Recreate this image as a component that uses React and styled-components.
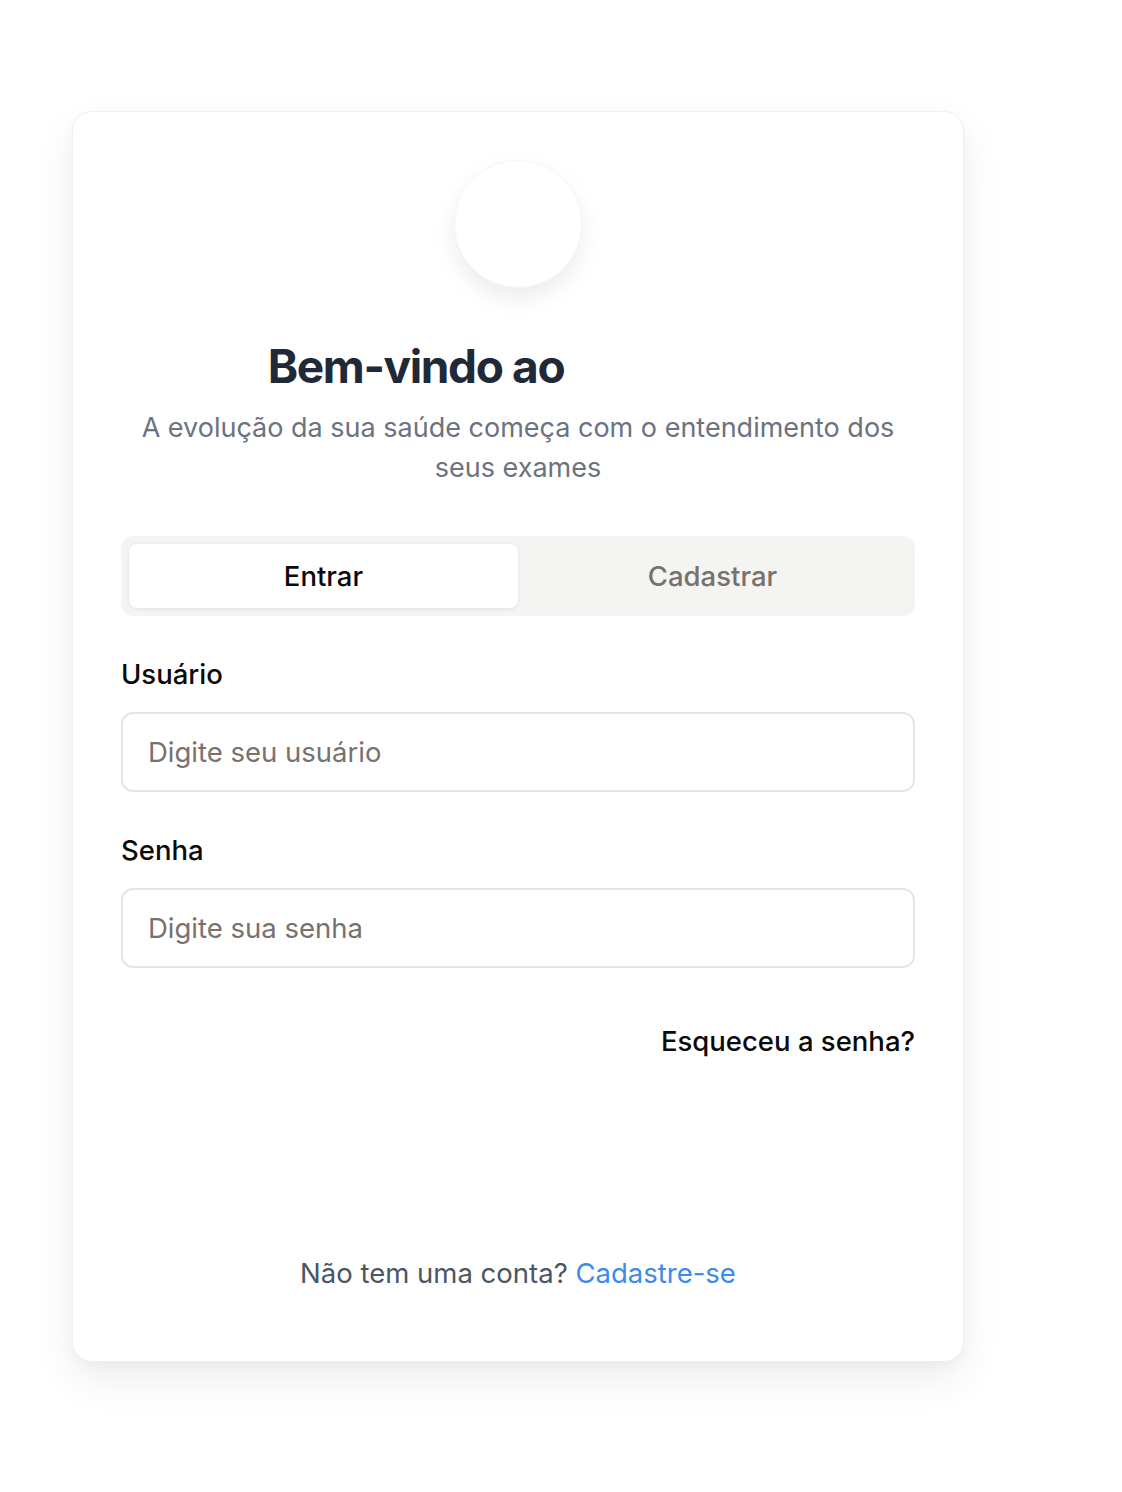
import React from "react";
import styled, { createGlobalStyle } from "styled-components";

const Global = createGlobalStyle`
  html, body { margin: 0; padding: 0; background: #ffffff; }
  body { font-family: Inter, "Noto Sans", "Liberation Sans", sans-serif; -webkit-font-smoothing: antialiased; }
  * { box-sizing: border-box; }
`;

const Page = styled.div`
  padding: 111px 0 120px 72px;
`;

const Card = styled.div`
  width: 892px;
  background: #ffffff;
  border: 1px solid #efefef;
  border-radius: 20px;
  box-shadow: 0 18px 40px rgba(0, 0, 0, 0.07), 0 4px 12px rgba(0, 0, 0, 0.03);
  padding: 48px 48px 68px;
  display: flex;
  flex-direction: column;
`;

const Avatar = styled.div`
  align-self: center;
  width: 128px;
  height: 128px;
  border-radius: 50%;
  background: #ffffff;
  border: 1px solid #f6f6f6;
  box-shadow: 0 10px 22px rgba(0, 0, 0, 0.08);
`;

const TitleRow = styled.div`
  display: flex;
  justify-content: center;
  align-items: center;
  gap: 8px;
  margin-top: 52px;
`;

const Title = styled.h1`
  margin: 0;
  font-size: 46px;
  line-height: 52px;
  font-weight: 700;
  letter-spacing: -0.03em;
  color: #1f2937;
`;

const LogoSlot = styled.span`
  display: inline-block;
  width: 196px;
  height: 40px;
`;

const Subtitle = styled.p`
  margin: 16px 0 0;
  text-align: center;
  font-size: 27px;
  line-height: 40px;
  color: #6b7280;
`;

const Tabs = styled.div`
  margin-top: 48px;
  display: grid;
  grid-template-columns: 1fr 1fr;
  padding: 8px;
  background: #f4f4f3;
  border-radius: 12px;
`;

const Tab = styled.button`
  height: 64px;
  border: none;
  border-radius: 8px;
  font-family: inherit;
  font-size: 27.5px;
  font-weight: 500;
  background: ${(p) => (p.$active ? "#ffffff" : "transparent")};
  color: ${(p) => (p.$active ? "#0c0a09" : "#78716c")};
  box-shadow: ${(p) => (p.$active ? "0 1px 4px rgba(0,0,0,0.08)" : "none")};
`;

const Field = styled.div`
  display: flex;
  flex-direction: column;
  gap: 20px;
  margin-top: 40px;
`;

const Label = styled.label`
  font-size: 27.5px;
  line-height: 36px;
  font-weight: 500;
  color: #0c0a09;
`;

const Input = styled.input`
  height: 80px;
  width: 100%;
  border: 2px solid #e7e5e4;
  border-radius: 12px;
  padding: 0 25px;
  font-family: inherit;
  font-size: 27.5px;
  color: #0c0a09;
  background: #fff;
  outline: none;
  &::placeholder { color: #78716c; }
`;

const Forgot = styled.a`
  align-self: flex-end;
  margin-top: 53px;
  font-size: 27.5px;
  line-height: 40px;
  font-weight: 500;
  color: #0c0a09;
  text-decoration: none;
`;

const Footer = styled.p`
  margin: 192px 0 0;
  text-align: center;
  font-size: 27.5px;
  line-height: 40px;
  color: #4b5563;
`;

const Link = styled.a`
  color: #3b8beb;
  text-decoration: none;
`;

export default function App() {
  return (
    <>
      <Global />
      <Page>
        <Card>
          <Avatar />
          <TitleRow>
            <Title>Bem-vindo ao</Title>
            <LogoSlot />
          </TitleRow>
          <Subtitle>
            A evolução da sua saúde começa com o entendimento dos seus exames
          </Subtitle>
          <Tabs>
            <Tab $active>Entrar</Tab>
            <Tab>Cadastrar</Tab>
          </Tabs>
          <Field>
            <Label>Usuário</Label>
            <Input placeholder="Digite seu usuário" />
          </Field>
          <Field>
            <Label>Senha</Label>
            <Input type="password" placeholder="Digite sua senha" />
          </Field>
          <Forgot href="#">Esqueceu a senha?</Forgot>
          <Footer>
            Não tem uma conta? <Link href="#">Cadastre-se</Link>
          </Footer>
        </Card>
      </Page>
    </>
  );
}
